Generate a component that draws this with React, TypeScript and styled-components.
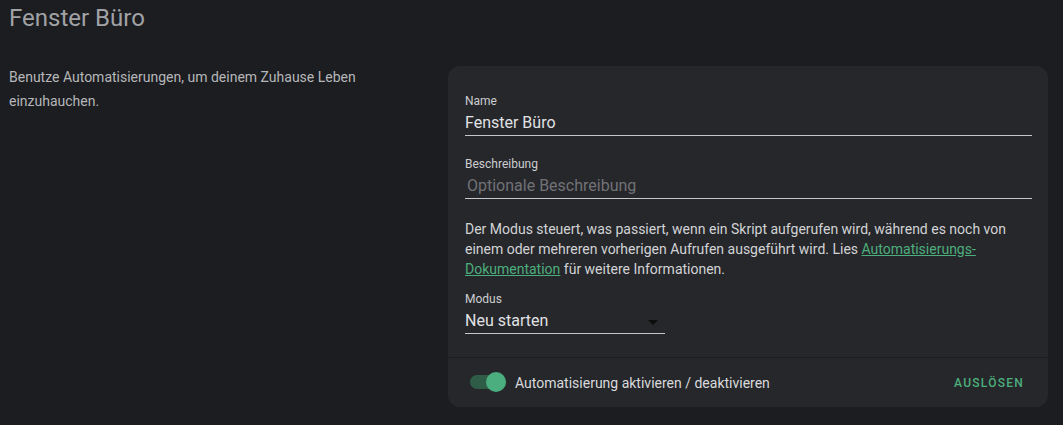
import styled, { createGlobalStyle } from "styled-components";

const GlobalStyle = createGlobalStyle`
    body {
        margin: 0;
        background: #1c1d21;
        font-family: Roboto, "Noto Sans", sans-serif;
    }
`

const Page = styled.div`
    padding: 0 15px 0 9px;
`

const Title = styled.h1`
    margin: 2px 0 0 0;
    font-size: 24px;
    line-height: 32px;
    font-weight: 400;
    color: #a1a2a5;
`

const Row = styled.div`
    display: flex;
    align-items: flex-start;
    margin-top: 31px;
`

const Intro = styled.p`
    width: 400px;
    margin: 0 39px 0 0;
    font-size: 14px;
    line-height: 24px;
    color: #b6b7b9;
`

const Card = styled.div`
    flex: 1;
    margin-top: 1px;
    background: #26272b;
    border-radius: 12px;
`

const CardContent = styled.div`
    padding: 27px 16px 23px 17px;
`

const Field = styled.div<{ $top?: number; $width?: string }>`
    margin-top: ${p => p.$top ?? 0}px;
    width: ${p => p.$width ?? "auto"};
`

const Label = styled.div`
    font-size: 12px;
    line-height: 16px;
    margin-bottom: 2px;
    color: #cdced0;
`

const Value = styled.div<{ $placeholder?: boolean }>`
    position: relative;
    height: 24px;
    font-size: 16px;
    line-height: 24px;
    color: ${p => p.$placeholder ? "#717276" : "#e1e2e4"};
    padding-left: ${p => p.$placeholder ? "2px" : "0"};
    border-bottom: 1px solid #c6c7c9;
`

const Arrow = styled.span`
    position: absolute;
    right: 7px;
    top: 11px;
    width: 0;
    height: 0;
    border-left: 5px solid transparent;
    border-right: 5px solid transparent;
    border-top: 5px solid #0d0d0e;
`

const Info = styled.p`
    margin: 20px 0 0;
    font-size: 14px;
    line-height: 20px;
    color: #d2d3d5;
`

const Link = styled.a`
    color: #4cae7c;
    text-decoration: underline;
`

const Footer = styled.div`
    height: 49px;
    border-top: 1px solid #1c1d20;
    display: flex;
    align-items: center;
    padding: 0 24px 0 22px;
`

const Switch = styled.div`
    position: relative;
    width: 36px;
    height: 14px;
    border-radius: 7px;
    background: #2f5c47;
    margin-top: -2px;
`

const Thumb = styled.span`
    position: absolute;
    right: 0;
    top: -3px;
    width: 20px;
    height: 20px;
    border-radius: 50%;
    background: #4bae7f;
`

const FooterText = styled.span`
    margin-left: 9px;
    font-size: 14px;
    color: #d9dadc;
    flex: 1;
`

const Button = styled.span`
    font-size: 12px;
    font-weight: 500;
    letter-spacing: 1.25px;
    color: #4cae7c;
    text-transform: uppercase;
`

export default function App() {
    return (
        <Page>
            <GlobalStyle />
            <Title>Fenster Büro</Title>
            <Row>
                <Intro>Benutze Automatisierungen, um deinem Zuhause Leben einzuhauchen.</Intro>
                <Card>
                    <CardContent>
                        <Field>
                            <Label>Name</Label>
                            <Value>Fenster Büro</Value>
                        </Field>
                        <Field $top={20}>
                            <Label>Beschreibung</Label>
                            <Value $placeholder>Optionale Beschreibung</Value>
                        </Field>
                        <Info>
                            Der Modus steuert, was passiert, wenn ein Skript aufgerufen wird, während es noch von
                            einem oder mehreren vorherigen Aufrufen ausgeführt wird. Lies{" "}
                            <Link>Automatisierungs-Dokumentation</Link> für weitere Informationen.
                        </Info>
                        <Field $top={12} $width="200px">
                            <Label>Modus</Label>
                            <Value>
                                Neu starten
                                <Arrow />
                            </Value>
                        </Field>
                    </CardContent>
                    <Footer>
                        <Switch>
                            <Thumb />
                        </Switch>
                        <FooterText>Automatisierung aktivieren / deaktivieren</FooterText>
                        <Button>Auslösen</Button>
                    </Footer>
                </Card>
            </Row>
        </Page>
    )
}
